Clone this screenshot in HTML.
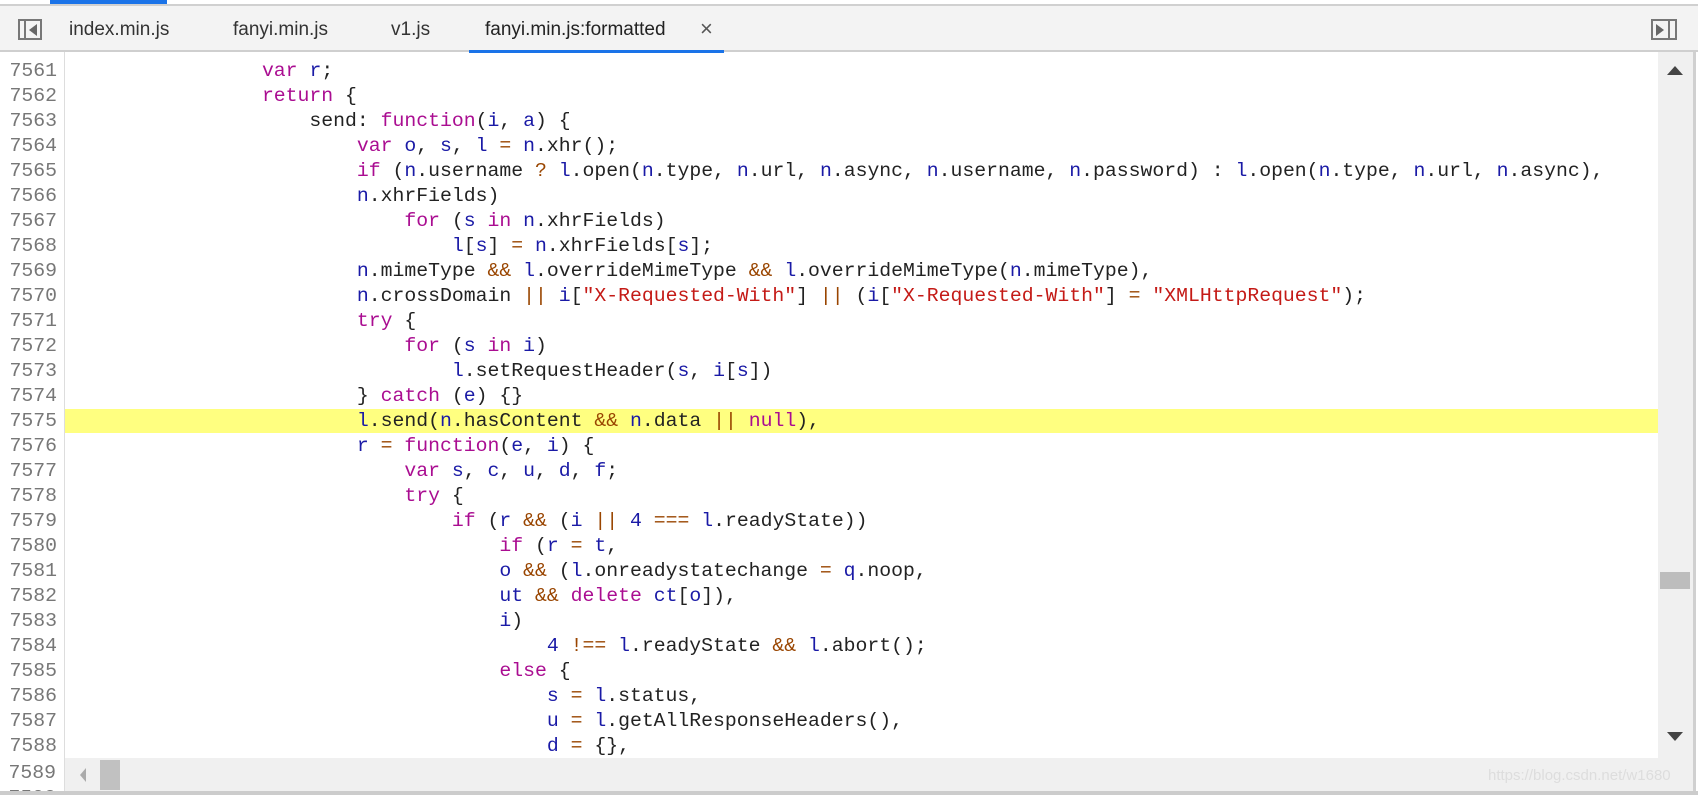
<!DOCTYPE html>
<html><head><meta charset="utf-8"><style>
*{margin:0;padding:0;box-sizing:border-box}
html,body{width:1698px;height:795px;overflow:hidden}
body{background:#fff;position:relative;font-family:"Liberation Sans",sans-serif}
#tabs{position:absolute;left:0;top:4px;width:1698px;height:48px;background:#f3f3f3;border-top:2px solid #d0d0d0;border-bottom:2px solid #cfcfcf}
.tab{position:absolute;top:13px;font-size:19px;color:#333}
#code{position:absolute;left:0;top:52px;width:1658px;height:706px;overflow:hidden}
#gut{position:absolute;left:0;top:0;width:65px;height:706px;border-right:1px solid #ddd;background:#fff}
.row{position:absolute;left:0;height:25px;width:1658px;font-family:"Liberation Mono",monospace;font-size:19.8px;line-height:25px;white-space:pre;color:#222}
.ln{position:absolute;left:0;width:57px;text-align:right;color:#777}
.c{position:absolute;left:72px}
.k{color:#aa0d91}.v{color:#1a1aa6}.o{color:#994500}.s{color:#c41a16}
</style></head><body>
<div id="tabs">
<div style="position:absolute;left:18px;top:13px;width:24px;height:21px;border:2px solid #777"><div style="position:absolute;left:4px;top:0;width:2px;height:17px;background:#777"></div><div style="position:absolute;left:9px;top:3px;border-right:8px solid #666;border-top:6px solid transparent;border-bottom:6px solid transparent"></div></div>
<div class="tab" style="left:69px">index.min.js</div>
<div class="tab" style="left:233px">fanyi.min.js</div>
<div class="tab" style="left:391px">v1.js</div>
<div class="tab" style="left:485px;color:#222">fanyi.min.js:formatted</div>
<div class="tab" style="left:700px;top:10px;font-size:22px;color:#555">×</div>
<div style="position:absolute;left:469px;top:44px;width:255px;height:3px;background:#1a73e8"></div>
<div style="position:absolute;left:1651px;top:13px;width:26px;height:21px;border:2px solid #777"><div style="position:absolute;right:5px;top:0;width:2px;height:17px;background:#777"></div><div style="position:absolute;left:3px;top:3px;border-left:8px solid #666;border-top:6px solid transparent;border-bottom:6px solid transparent"></div></div>
</div>
<div style="position:absolute;left:50px;top:0;width:117px;height:4px;background:#1a73e8"></div>
<div id="code">
<div style="position:absolute;left:65px;top:357px;width:1593px;height:24px;background:#ffff80"></div>
<div id="gut"></div>
<div id="rows"></div>
</div>
<div style="position:absolute;left:65px;top:758px;width:1593px;height:33px;background:#f0f0f0"></div>
<div style="position:absolute;left:100px;top:760px;width:20px;height:30px;background:#c1c1c1"></div>
<div style="position:absolute;left:80px;top:768px;border-right:6px solid #aaa;border-top:7px solid transparent;border-bottom:7px solid transparent"></div>
<div style="position:absolute;left:0;top:758px;width:65px;height:33px;overflow:hidden;background:#fff;border-right:1px solid #ddd;font-family:'Liberation Mono',monospace;font-size:19.8px;color:#777;text-align:right;padding-right:8px;line-height:25px;padding-top:3px">7589<br>7590</div>
<div style="position:absolute;left:0;top:791px;width:1698px;height:4px;background:#ccc"></div>
<div style="position:absolute;left:1658px;top:52px;width:35px;height:739px;background:#f0f0f0"></div>
<div style="position:absolute;left:1667px;top:66px;border-bottom:9px solid #444;border-left:8px solid transparent;border-right:8px solid transparent"></div>
<div style="position:absolute;left:1667px;top:732px;border-top:9px solid #444;border-left:8px solid transparent;border-right:8px solid transparent"></div>
<div style="position:absolute;left:1660px;top:572px;width:30px;height:17px;background:#bdbdbd"></div>
<div style="position:absolute;left:1693px;top:52px;width:3px;height:739px;background:#d0d0d0"></div>
<div style="position:absolute;left:1488px;top:767px;font-size:15px;color:#ddd">https://blog.csdn.net/w1680</div>
<script>
var L=[
[16,'<span class="k">var</span> <span class="v">r</span>;'],
[16,'<span class="k">return</span> {'],
[20,'send: <span class="k">function</span>(<span class="v">i</span>, <span class="v">a</span>) {'],
[24,'<span class="k">var</span> <span class="v">o</span>, <span class="v">s</span>, <span class="v">l</span> <span class="o">=</span> <span class="v">n</span>.xhr();'],
[24,'<span class="k">if</span> (<span class="v">n</span>.username <span class="o">?</span> <span class="v">l</span>.open(<span class="v">n</span>.type, <span class="v">n</span>.url, <span class="v">n</span>.async, <span class="v">n</span>.username, <span class="v">n</span>.password) : <span class="v">l</span>.open(<span class="v">n</span>.type, <span class="v">n</span>.url, <span class="v">n</span>.async),'],
[24,'<span class="v">n</span>.xhrFields)'],
[28,'<span class="k">for</span> (<span class="v">s</span> <span class="k">in</span> <span class="v">n</span>.xhrFields)'],
[32,'<span class="v">l</span>[<span class="v">s</span>] <span class="o">=</span> <span class="v">n</span>.xhrFields[<span class="v">s</span>];'],
[24,'<span class="v">n</span>.mimeType <span class="o">&amp;&amp;</span> <span class="v">l</span>.overrideMimeType <span class="o">&amp;&amp;</span> <span class="v">l</span>.overrideMimeType(<span class="v">n</span>.mimeType),'],
[24,'<span class="v">n</span>.crossDomain <span class="o">||</span> <span class="v">i</span>[<span class="s">"X-Requested-With"</span>] <span class="o">||</span> (<span class="v">i</span>[<span class="s">"X-Requested-With"</span>] <span class="o">=</span> <span class="s">"XMLHttpRequest"</span>);'],
[24,'<span class="k">try</span> {'],
[28,'<span class="k">for</span> (<span class="v">s</span> <span class="k">in</span> <span class="v">i</span>)'],
[32,'<span class="v">l</span>.setRequestHeader(<span class="v">s</span>, <span class="v">i</span>[<span class="v">s</span>])'],
[24,'} <span class="k">catch</span> (<span class="v">e</span>) {}'],
[24,'<span class="v">l</span>.send(<span class="v">n</span>.hasContent <span class="o">&amp;&amp;</span> <span class="v">n</span>.data <span class="o">||</span> <span class="k">null</span>),'],
[24,'<span class="v">r</span> <span class="o">=</span> <span class="k">function</span>(<span class="v">e</span>, <span class="v">i</span>) {'],
[28,'<span class="k">var</span> <span class="v">s</span>, <span class="v">c</span>, <span class="v">u</span>, <span class="v">d</span>, <span class="v">f</span>;'],
[28,'<span class="k">try</span> {'],
[32,'<span class="k">if</span> (<span class="v">r</span> <span class="o">&amp;&amp;</span> (<span class="v">i</span> <span class="o">||</span> <span class="v">4</span> <span class="o">===</span> <span class="v">l</span>.readyState))'],
[36,'<span class="k">if</span> (<span class="v">r</span> <span class="o">=</span> <span class="v">t</span>,'],
[36,'<span class="v">o</span> <span class="o">&amp;&amp;</span> (<span class="v">l</span>.onreadystatechange <span class="o">=</span> <span class="v">q</span>.noop,'],
[36,'<span class="v">ut</span> <span class="o">&amp;&amp;</span> <span class="k">delete</span> <span class="v">ct</span>[<span class="v">o</span>]),'],
[36,'<span class="v">i</span>)'],
[40,'<span class="v">4</span> <span class="o">!==</span> <span class="v">l</span>.readyState <span class="o">&amp;&amp;</span> <span class="v">l</span>.abort();'],
[36,'<span class="k">else</span> {'],
[40,'<span class="v">s</span> <span class="o">=</span> <span class="v">l</span>.status,'],
[40,'<span class="v">u</span> <span class="o">=</span> <span class="v">l</span>.getAllResponseHeaders(),'],
[40,'<span class="v">d</span> <span class="o">=</span> {},']
];
var h='';
for(var i=0;i<L.length;i++){h+='<div class="row" style="top:'+(7+i*25)+'px"><span class="ln">'+(7561+i)+'</span><span class="c">'+' '.repeat(L[i][0])+L[i][1]+'</span></div>';}
document.getElementById('rows').innerHTML=h;
</script>
</body></html>
